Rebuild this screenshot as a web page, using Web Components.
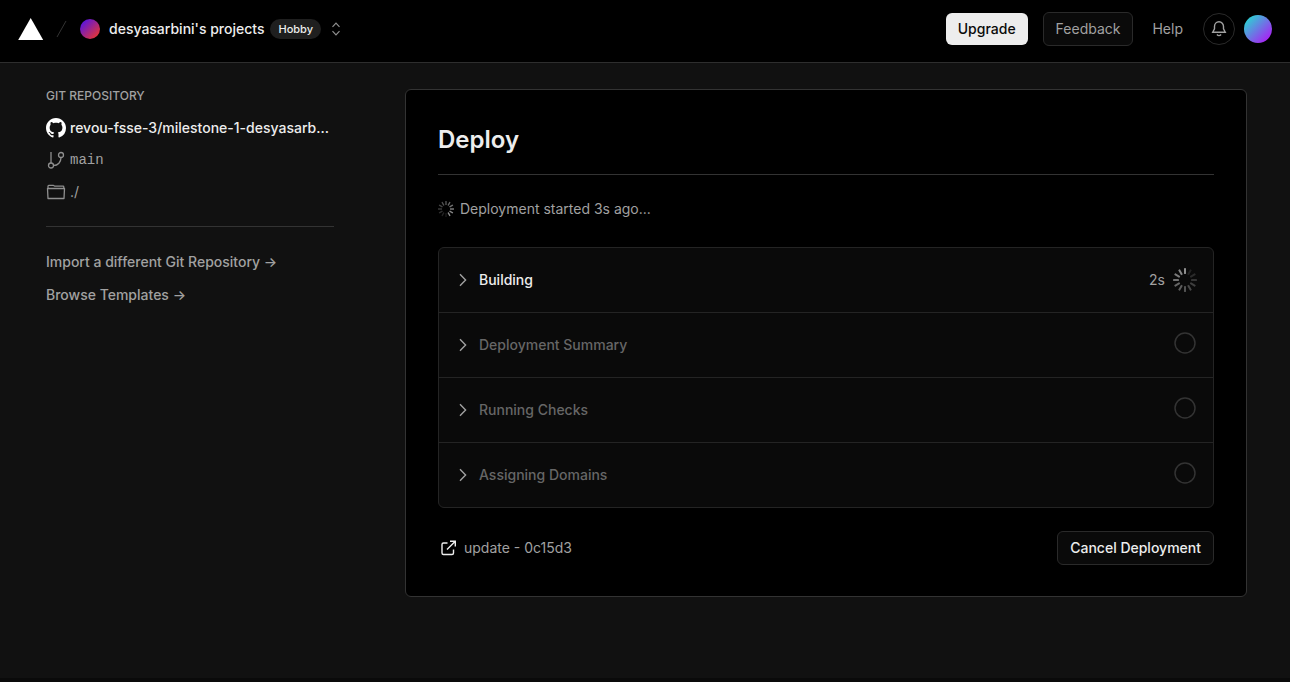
<!DOCTYPE html>
<html lang="en">
<head>
<meta charset="utf-8">
<meta name="viewport" content="width=device-width, initial-scale=1">
<title>Deploy</title>
<style>
:root{
  --bg:#111;--black:#000;--panel:#0a0a0a;--line:#333;--line-soft:#242424;
  --text:#ededed;--muted:#a1a1a1;--dim:#666;
}
html,body{margin:0;min-height:100%;background:var(--bg)}
body{font:14px/20px Inter,"Liberation Sans",sans-serif;color:var(--text)}
</style>
</head>
<body>
<deploy-page></deploy-page>
<script>
const BASE = `*{box-sizing:border-box}svg{display:block;flex:none}a{color:inherit;text-decoration:none}button{font:inherit;color:inherit;cursor:pointer;margin:0}`;
function define(name, css, html){
  const t = document.createElement('template');
  t.innerHTML = `<style>${BASE}${css}</style>${html}`;
  customElements.define(name, class extends HTMLElement{
    constructor(){
      super();
      this.attachShadow({mode:'open'}).append(t.content.cloneNode(true));
    }
  });
}

/* Twelve spokes fading round the circle. */
customElements.define('load-spinner', class extends HTMLElement{
  connectedCallback(){
    const size = this.getAttribute('size') || 24;
    const start = Number(this.getAttribute('start') || 0);
    let bars = '';
    for(let i=0;i<12;i++){
      const age = (start - i + 12) % 12;
      bars += `<rect x="11" y="0" width="2" height="6" rx="0.4" opacity="${(1 - age*0.075).toFixed(2)}" transform="rotate(${i*30} 12 12)"/>`;
    }
    const root = this.shadowRoot || this.attachShadow({mode:'open'});
    root.innerHTML = `<style>:host{display:block;flex:none;color:#8f8f8f}svg{display:block}</style>
      <svg width="${size}" height="${size}" viewBox="0 0 24 24" fill="currentColor" aria-hidden="true">${bars}</svg>`;
  }
});

define('pill-badge', `:host{display:inline-flex;align-items:center;height:20px;padding:0 8px;border-radius:10px;background:#1f1f1f;color:var(--text);font-size:11px;font-weight:500}`, `<slot></slot>`);

define('ui-button', `
:host{display:block}
button{display:block;height:34px;padding:0 12px;border:1px solid #2a2a2a;border-radius:6px;background:var(--panel);color:var(--text);font-weight:500;white-space:nowrap}
:host([kind=primary]) button{height:32px;border:0;background:#ededed;color:#0a0a0a}
:host([kind=quiet]) button{color:var(--muted);font-weight:400}
`, `<button type="button"><slot></slot></button>`);

define('top-bar', `
:host{display:block}
header{display:flex;align-items:center;justify-content:space-between;min-height:63px;padding:0 18px 4px;background:var(--black);border-bottom:1px solid #2e2e2e}
nav,.right{display:flex;align-items:center}
.slash{margin:0 10px 0 12px}
.team{display:flex;align-items:center;gap:6px;font-weight:500}
.team i{width:20px;height:20px;border-radius:50%;background:linear-gradient(135deg,#4210fa,#fa3a1c);margin-right:3px}
.switch,.bell{display:flex;align-items:center;justify-content:center;padding:0;border:0;background:none;color:#8f8f8f}
.switch{margin-left:8px}
ui-button{margin-right:15px}
.help{color:var(--muted);margin:0 20px 0 4px}
.bell{width:32px;height:32px;border:1px solid #2a2a2a;border-radius:50%;color:var(--muted);margin-right:9px}
.me{width:28px;height:28px;border:0;border-radius:50%;padding:0;background:linear-gradient(135deg,#21e0d0 5%,#ad1cf5 90%)}
`, `
<header>
  <nav aria-label="Team">
    <a href="#" aria-label="Home"><svg width="26" height="22" viewBox="0 0 26 22"><path d="M12.7 0 25.2 22H.2z" fill="#fff"/></svg></a>
    <svg class="slash" width="14" height="20" viewBox="0 0 14 20" aria-hidden="true"><path d="M10 2 1 18" stroke="#333" fill="none"/></svg>
    <a class="team" href="#"><i></i><span>desyasarbini's projects</span><pill-badge>Hobby</pill-badge></a>
    <button class="switch" type="button" aria-label="Switch team"><svg width="14" height="14" viewBox="0 0 14 14" fill="none" stroke="currentColor" stroke-width="1.2"><path d="M3.5 4.8 7 1.2l3.500 3.600M3.500 9.200 7 12.800l3.500-3.600"/></svg></button>
  </nav>
  <div class="right">
    <ui-button kind="primary">Upgrade</ui-button>
    <ui-button kind="quiet">Feedback</ui-button>
    <a class="help" href="#">Help</a>
    <button class="bell" type="button" aria-label="Notifications"><svg width="16" height="16" viewBox="0 0 16 16" fill="none" stroke="currentColor" stroke-width="1.4"><path d="M8 .8C5.300.8 3.500 2.900 3.500 5.500V7.800L1.700 11.300H14.300L12.500 7.800V5.500C12.500 2.900 10.700.8 8 .8Z"/><path d="M5.900 13.500Q8 15.800 10.100 13.500"/></svg></button>
    <button class="me" type="button" aria-label="Account"></button>
  </div>
</header>`);

define('git-panel', `
:host{display:block}
h2{margin:0;font-size:12px;line-height:16px;font-weight:500;color:var(--muted);text-transform:uppercase}
ul{list-style:none;margin:8px 0 0;padding:0 0 18px;border-bottom:1px solid var(--line)}
li{display:flex;align-items:center;gap:4px;height:32px;color:var(--muted)}
li svg{width:20px;height:20px}
.repo{color:var(--text);font-weight:500;white-space:nowrap}
.mono{font-family:"Liberation Mono",monospace}
.links{display:grid;gap:13px;justify-items:start;margin-top:25px;color:var(--muted);font-weight:500}
`, `
<h2>Git Repository</h2>
<ul>
  <li><svg viewBox="0 0 16 16" fill="#fff" aria-hidden="true"><path d="M8 0C3.580 0 0 3.580 0 8c0 3.540 2.290 6.530 5.470 7.590.4.070.55-.17.55-.38 0-.19-.01-.82-.01-1.490-2.010.37-2.530-.49-2.690-.94-.09-.23-.48-.94-.82-1.130-.28-.15-.68-.52-.01-.53.63-.01 1.080.58 1.230.82.72 1.210 1.870.87 2.330.66.070-.52.28-.87.51-1.070-1.780-.2-3.640-.89-3.640-3.950 0-.87.31-1.590.82-2.150-.08-.2-.36-1.020.08-2.120 0 0 .67-.21 2.200.82.640-.18 1.320-.27 2-.27s1.360.09 2 .27c1.530-1.040 2.200-.82 2.200-.82.440 1.100.16 1.920.08 2.120.51.56.82 1.270.82 2.150 0 3.070-1.870 3.750-3.650 3.950.29.25.54.73.54 1.480 0 1.070-.01 1.930-.01 2.200 0 .21.15.46.55.38A8.010 8.010 0 0 0 16 8c0-4.420-3.580-8-8-8z"/></svg><a class="repo" href="#">revou-fsse-3/milestone-1-desyasarb...</a></li>
  <li><svg viewBox="0 0 20 20" fill="none" stroke="#8f8f8f" stroke-width="1.300" aria-hidden="true"><path d="M5 2V13M7.500 15.500C12 15.500 15 12 15 7.500"/><circle cx="5" cy="15.500" r="2.500"/><circle cx="15" cy="5" r="2.500"/></svg><span class="mono">main</span></li>
  <li><svg viewBox="0 0 20 20" fill="none" stroke="#8f8f8f" stroke-width="1.300" stroke-linejoin="round" aria-hidden="true"><path d="M2 6.200V4.200Q2 3.300 2.800 3.300H7.200L8.800 4.200H17Q17.800 4.200 17.800 5V6.200M1.500 6.500H18.500L18 16.500H2Z"/></svg><span>./</span></li>
</ul>
<div class="links"><a href="#">Import a different Git Repository →</a><a href="#">Browse Templates →</a></div>`);

define('deploy-step', `
:host{display:block;border-top:1px solid var(--line-soft);color:var(--dim)}
:host(:first-child){border-top:0}
:host([active]){color:var(--text)}
button{display:flex;align-items:center;width:100%;height:64px;padding:0 16px;border:0;background:none;font-weight:500;text-align:left}
.chev{margin-right:8px;color:#a1a1a1}
.status{display:flex;align-items:center;gap:8px;margin-left:auto;color:var(--muted);font-weight:400}
.ring{margin:0 1px 4px 0;color:#333}
`, `
<button type="button" aria-expanded="false">
  <svg class="chev" width="16" height="16" viewBox="0 0 16 16" fill="none" stroke="currentColor" stroke-width="1.400"><path d="M5 2.200 10.600 8 5 13.800"/></svg>
  <slot></slot>
  <span class="status"><slot name="status"><svg class="ring" width="22" height="22" viewBox="0 0 22 22" fill="none" stroke="currentColor" stroke-width="1.500" aria-hidden="true"><circle cx="11" cy="11" r="10"/></svg></slot></span>
</button>`);

define('deploy-card', `
:host{display:block}
section{padding:32px 32px 31px;border:1px solid var(--line);border-radius:6px;background:var(--black)}
h1{margin:0;padding:2px 0 18px;font-size:24px;line-height:32px;font-weight:600;border-bottom:1px solid var(--line)}
.state{display:flex;align-items:center;gap:6px;margin:24px 0 28px;color:var(--muted)}
.steps{border:1px solid var(--line-soft);border-radius:6px;background:var(--panel)}
.foot{display:flex;align-items:center;justify-content:space-between;margin-top:23px}
.foot a{display:flex;align-items:center;gap:6px;padding-left:2px;color:var(--muted)}
.foot svg{color:var(--text)}
`, `
<section>
  <h1>Deploy</h1>
  <div class="state" role="status"><load-spinner size="16" start="5"></load-spinner><span>Deployment started 3s ago...</span></div>
  <div class="steps">
    <deploy-step active>Building<span slot="status">2s</span><load-spinner slot="status" size="24" start="0"></load-spinner></deploy-step>
    <deploy-step>Deployment Summary</deploy-step>
    <deploy-step>Running Checks</deploy-step>
    <deploy-step>Assigning Domains</deploy-step>
  </div>
  <div class="foot">
    <a href="#"><svg width="18" height="18" viewBox="0 0 18 18" fill="none" stroke="currentColor" stroke-width="1.400" aria-hidden="true"><path d="M7.500 4H3.500Q2 4 2 5.500V14Q2 15.500 3.500 15.500H12Q13.500 15.500 13.500 14V10.500M10 2.200H15.300V7.500M15.300 2.200 7 10.500"/></svg>update - 0c15d3</a>
    <ui-button>Cancel Deployment</ui-button>
  </div>
</section>`);

define('deploy-page', `
:host{display:flex;flex-direction:column;min-height:100vh}
main{flex:1;display:grid;grid-template-columns:288px minmax(0,1fr);column-gap:71px;align-items:start;padding:25px 43px 80px 46px}
deploy-card{margin-top:1px}
footer{height:4px;background:#0a0a0a}
`, `
<top-bar></top-bar>
<main><git-panel></git-panel><deploy-card></deploy-card></main>
<footer></footer>`);
</script>
</body>
</html>
